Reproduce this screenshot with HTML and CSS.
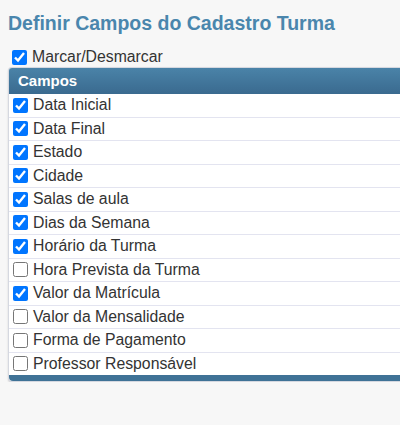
FILE: index.html
```html
<!DOCTYPE html>
<html lang="pt-BR">
<head>
<meta charset="utf-8">
<title>Definir Campos do Cadastro Turma</title>
<link rel="stylesheet" href="styles.css">
</head>
<body>
<h1 class="title">Definir Campos do Cadastro Turma</h1>
<label class="toggle-all"><input type="checkbox" checked> Marcar/Desmarcar</label>
<div class="panel">
  <div class="panel-head">Campos</div>
  <ul class="fields">
    <li><label><input type="checkbox" checked> Data Inicial</label></li>
    <li><label><input type="checkbox" checked> Data Final</label></li>
    <li><label><input type="checkbox" checked> Estado</label></li>
    <li><label><input type="checkbox" checked> Cidade</label></li>
    <li><label><input type="checkbox" checked> Salas de aula</label></li>
    <li><label><input type="checkbox" checked> Dias da Semana</label></li>
    <li><label><input type="checkbox" checked> Horário da Turma</label></li>
    <li><label><input type="checkbox"> Hora Prevista da Turma</label></li>
    <li><label><input type="checkbox" checked> Valor da Matrícula</label></li>
    <li><label><input type="checkbox"> Valor da Mensalidade</label></li>
    <li><label><input type="checkbox"> Forma de Pagamento</label></li>
    <li><label><input type="checkbox"> Professor Responsável</label></li>
  </ul>
  <div class="panel-foot"></div>
</div>
</body>
</html>
```
FILE: styles.css
```css
html, body {
  margin: 0;
  padding: 0;
  background: #f7f7f7;
}
body {
  padding: 0 0 0 8px;
  font-family: "Liberation Sans", Arial, sans-serif;
  color: #333;
  overflow: hidden;
}
.title {
  margin: 0;
  padding-top: 12px;
  height: 35px;
  font-size: 19.5px;
  font-weight: bold;
  color: #4a86ad;
  line-height: 22px;
}
.toggle-all {
  display: flex;
  align-items: center;
  height: 20px;
  font-size: 15.8px;
  color: #333;
}
.toggle-all input,
.fields input {
  width: 15px;
  height: 15px;
  margin: 0 5px 0 4px;
  accent-color: #0075ff;
}
.panel {
  margin-top: 0;
  border: 1px solid #d5d8e0;
  border-right: none;
  border-radius: 4px 0 0 4px;
  background: #fff;
  box-shadow: 0 1px 2px rgba(0,0,0,0.15);
}
.panel-head {
  height: 26px;
  line-height: 25px;
  padding-left: 9px;
  color: #fff;
  font-weight: bold;
  font-size: 15px;
  background: linear-gradient(#4a83a8, #3a6a8f);
  border-radius: 3px 0 0 0;
}
.fields {
  list-style: none;
  margin: 0;
  padding: 0;
}
.fields li {
  height: 22.5px;
  border-bottom: 1px solid #e3e4f0;
  display: flex;
  align-items: center;
}
.fields li:last-child {
  border-bottom: none;
}
.fields label {
  display: flex;
  align-items: center;
  font-size: 15.8px;
  color: #333;
}
.panel-foot {
  height: 6px;
  background: #3f7296;
  border-radius: 0 0 0 4px;
}
```
